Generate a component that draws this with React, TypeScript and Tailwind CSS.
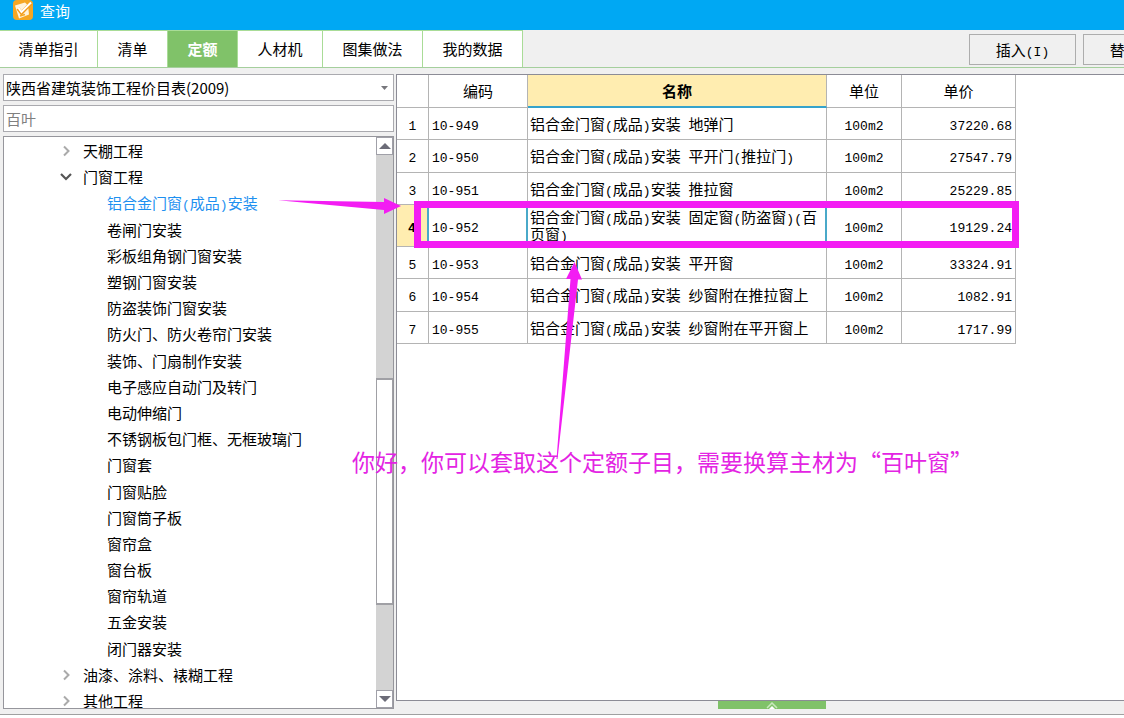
import { useState } from "react";

const TABS = [
  { label: "清单指引", width: "w-[98px]" },
  { label: "清单", width: "w-[70px]" },
  { label: "定额", width: "w-[70px]" },
  { label: "人材机", width: "w-[85px]" },
  { label: "图集做法", width: "w-[100px]" },
  { label: "我的数据", width: "w-[100px]" },
];

type TreeNode = { label: string; level: 1 | 2; open?: boolean };

const TREE: TreeNode[] = [
  { label: "天棚工程", level: 1 },
  { label: "门窗工程", level: 1, open: true },
  { label: "铝合金门窗(成品)安装", level: 2 },
  { label: "卷闸门安装", level: 2 },
  { label: "彩板组角钢门窗安装", level: 2 },
  { label: "塑钢门窗安装", level: 2 },
  { label: "防盗装饰门窗安装", level: 2 },
  { label: "防火门、防火卷帘门安装", level: 2 },
  { label: "装饰、门扇制作安装", level: 2 },
  { label: "电子感应自动门及转门", level: 2 },
  { label: "电动伸缩门", level: 2 },
  { label: "不锈钢板包门框、无框玻璃门", level: 2 },
  { label: "门窗套", level: 2 },
  { label: "门窗贴脸", level: 2 },
  { label: "门窗筒子板", level: 2 },
  { label: "窗帘盒", level: 2 },
  { label: "窗台板", level: 2 },
  { label: "窗帘轨道", level: 2 },
  { label: "五金安装", level: 2 },
  { label: "闭门器安装", level: 2 },
  { label: "油漆、涂料、裱糊工程", level: 1 },
  { label: "其他工程", level: 1 },
];

const ROWS = [
  { code: "10-949", name: "铝合金门窗(成品)安装 地弹门", price: "37220.68" },
  { code: "10-950", name: "铝合金门窗(成品)安装 平开门(推拉门)", price: "27547.79" },
  { code: "10-951", name: "铝合金门窗(成品)安装 推拉窗", price: "25229.85" },
  { code: "10-952", name: "铝合金门窗(成品)安装 固定窗(防盗窗)(百页窗)", price: "19129.24" },
  { code: "10-953", name: "铝合金门窗(成品)安装 平开窗", price: "33324.91" },
  { code: "10-954", name: "铝合金门窗(成品)安装 纱窗附在推拉窗上", price: "1082.91" },
  { code: "10-955", name: "铝合金门窗(成品)安装 纱窗附在平开窗上", price: "1717.99" },
];

// half-width characters are set in a mono face, half as wide as a Chinese one
function Mixed({ text }: { text: string }) {
  const parts = text.split(/([\x20-\x7e]+)/).filter(Boolean);
  return (
    <>
      {parts.map((p, i) =>
        /^[\x20-\x7e]/.test(p) ? (
          <span key={i} className="font-['Liberation_Mono',monospace] text-[13px] leading-none">
            {p}
          </span>
        ) : (
          p
        ),
      )}
    </>
  );
}

function Logo() {
  return (
    <svg className="size-5" viewBox="0 0 20 20" aria-hidden>
      <rect width="20" height="20" rx="4" fill="#f5a623" />
      <path d="M2 5.5 12 2.5l3 3 1 9L6 18.5z" fill="#fff3dc" />
      <path d="M5 8.500l3.500 4.500L18 3" fill="none" stroke="#f29a1a" strokeWidth="3.600" />
      <path d="M5.500 8l3 4L18 2.500" fill="none" stroke="#fff" strokeWidth="2" />
      <path d="M7 16l5-1.500" stroke="#f5a623" strokeWidth="1.500" />
    </svg>
  );
}

function Chevron({ open }: { open?: boolean }) {
  return (
    <svg className="h-3 w-3 shrink-0" viewBox="0 0 12 12" fill="none" aria-hidden>
      {open ? (
        <path d="M1 3l5 5 5-5" stroke="#555" strokeWidth="2.200" />
      ) : (
        <path d="M4 1.500l4.500 4.500L4 10.500" stroke="#aaa" strokeWidth="2" />
      )}
    </svg>
  );
}

function ScrollButton({ down }: { down?: boolean }) {
  return (
    <button
      type="button"
      aria-label={down ? "向下滚动" : "向上滚动"}
      className="flex h-[18px] w-full shrink-0 items-center justify-center border border-[#a0a0a8] bg-white"
    >
      <svg className="h-[6px] w-[12px]" viewBox="0 0 12 6" aria-hidden>
        <path d={down ? "M0 0h12L6 6z" : "M0 6h12L6 0z"} fill="#6c6c78" />
      </svg>
    </button>
  );
}

function Sidebar() {
  const [selected, setSelected] = useState("铝合金门窗(成品)安装");
  return (
    <aside className="flex w-[391px] shrink-0 flex-col gap-1">
      <div className="relative">
        <select
          aria-label="定额库"
          className="block h-[27px] w-full appearance-none border border-[#aaaaaf] bg-white px-[2px] text-[15px] outline-none"
        >
          <option>陕西省建筑装饰工程价目表(2009)</option>
        </select>
        <svg className="pointer-events-none absolute top-3 right-[6px] h-1 w-[7px]" viewBox="0 0 7 4" aria-hidden>
          <path d="M0 0h7L3.500 4z" fill="#77777c" />
        </svg>
      </div>
      <input
        aria-label="搜索"
        defaultValue="百叶"
        className="h-[27px] w-full border border-[#aaaaaf] bg-white px-[2px] text-[15px] text-[#808080] outline-none"
      />
      <div className="flex min-h-0 flex-1 border border-[#96969c] bg-white">
        <div className="min-w-0 flex-1 overflow-hidden">
          <ul className="flex h-[577px] flex-col pt-px">
            {TREE.map((n) => (
              <li key={n.label} className={n.level === 1 ? "flex min-h-0 flex-1 pl-14" : "flex min-h-0 flex-1 pl-[103px]"}>
                <button
                  type="button"
                  onClick={() => setSelected(n.label)}
                  className={
                    n.label === selected
                      ? "flex items-center gap-[11px] whitespace-nowrap text-[#1e90f0]"
                      : "flex items-center gap-[11px] whitespace-nowrap"
                  }
                >
                  {n.level === 1 && <Chevron open={n.open} />}
                  <span>
                    <Mixed text={n.label} />
                  </span>
                </button>
              </li>
            ))}
          </ul>
        </div>
        <div className="flex w-[17px] shrink-0 flex-col bg-[#d3d3d3]">
          <ScrollButton />
          <div className="flex min-h-0 flex-1 flex-col">
            <div className="flex-[225]" />
            <div className="flex-[225] border-x border-y-2 border-[#a0a0a5] bg-white" />
            <div className="flex-[86]" />
          </div>
          <ScrollButton down />
        </div>
      </div>
    </aside>
  );
}

function QuotaTable() {
  const head = "border-r border-b border-[#b4b4b4] p-0 font-normal";
  const cell = "border-r border-b border-[#b4b4b4] px-[3px] py-0";
  return (
    <table className="w-[619px] table-fixed border-separate border-spacing-0">
      <colgroup>
        <col className="w-8" />
        <col className="w-[99px]" />
        <col className="w-[299px]" />
        <col className="w-[75px]" />
        <col className="w-[114px]" />
      </colgroup>
      <thead>
        <tr className="h-[33px]">
          <th className={head} />
          <th className={head}>编码</th>
          <th className="border-r border-b-2 border-r-[#b4b4b4] border-b-[#35a3cc] bg-[#ffedb0] p-0 font-bold">名称</th>
          <th className={head}>单位</th>
          <th className={head}>单价</th>
        </tr>
      </thead>
      <tbody>
        {ROWS.map((r, i) => {
          const active = i === 3;
          return (
            <tr key={r.code} className={active ? "h-[42px]" : "odd:h-8 even:h-[33px]"}>
              <td
                className={
                  active
                    ? "border-r-2 border-b border-r-[#4aa9c9] border-b-[#b4b4b4] bg-[#ffedb0] p-0 text-center font-bold"
                    : "border-r border-b border-[#b4b4b4] p-0 text-center"
                }
              >
                <Mixed text={String(i + 1)} />
              </td>
              <td className={active ? "border-r-2 border-b border-r-[#4aa9c9] border-b-[#b4b4b4] px-[3px] py-0" : cell}>
                <Mixed text={r.code} />
              </td>
              <td
                className={
                  active
                    ? "border-r-2 border-b border-r-[#4aa9c9] border-b-[#b4b4b4] px-[2px] py-0 leading-4"
                    : "border-r border-b border-[#b4b4b4] px-[2px] py-0"
                }
              >
                <Mixed text={r.name} />
              </td>
              <td className={`${cell} text-center`}>
                <Mixed text="100m2" />
              </td>
              <td className={`${cell} text-right`}>
                <Mixed text={r.price} />
              </td>
            </tr>
          );
        })}
      </tbody>
    </table>
  );
}

// hand-drawn notes that lie over the window
function Annotations() {
  return (
    <div className="pointer-events-none absolute inset-0">
      <div className="absolute top-[201px] left-[414px] h-[47px] w-[605px] border-[7px] border-[#f31cf3]" />
      <svg className="absolute top-[198px] left-[278px] h-4 w-[124px]" viewBox="0 0 124 16" fill="#f31cf3" aria-hidden>
        <path d="M0 2.300 106 4V0l17 8-17 8v-4z" />
      </svg>
      <svg className="absolute top-[262px] left-[556px] h-[197px] w-7" viewBox="0 0 28 197" fill="#f31cf3" aria-hidden>
        <path d="M.500 197 14.500 17H10L18.500 0 26 17.500h-4L1.500 197z" />
      </svg>
      <p className="absolute top-[444px] left-[352px] text-[23px] leading-[34px] whitespace-nowrap text-[#e324e3]">
        你好，你可以套取这个定额子目，需要换算主材为“百叶窗”
      </p>
    </div>
  );
}

export default function App() {
  const [tab, setTab] = useState("定额");
  return (
    <div
      lang="zh-CN"
      className="relative flex h-screen flex-col overflow-hidden bg-white font-['Noto_Sans_CJK_SC',sans-serif] text-[15px] leading-5 text-black"
    >
      <header className="flex h-[30px] shrink-0 items-start gap-[7px] bg-[#00a8f3] pl-[13px] text-white">
        <Logo />
        <h1 className="pt-px">查询</h1>
      </header>

      <div className="flex h-[38px] shrink-0 justify-between overflow-hidden border-b border-[#a5cf9d] bg-[#f0f0f0]">
        <nav className="flex shrink-0 border-t border-[#a9dc97]">
          {TABS.map((t) => (
            <button
              key={t.label}
              type="button"
              onClick={() => setTab(t.label)}
              className={`${t.width} border-r border-[#a9dc97] ${
                t.label === tab ? "bg-[#80c269] font-bold text-white" : "bg-white"
              }`}
            >
              {t.label}
            </button>
          ))}
        </nav>
        <div className="flex w-[155px] shrink-0 gap-[7px] pt-1">
          <button type="button" className="h-[31px] w-[107px] shrink-0 border border-[#adadad] bg-[#f0f0f0]">
            <Mixed text="插入(I)" />
          </button>
          <button type="button" className="h-[31px] w-[107px] shrink-0 border border-[#adadad] bg-[#f0f0f0]">
            <Mixed text="替换(R)" />
          </button>
        </div>
      </div>

      <div className="mb-[3px] flex min-h-0 flex-1 gap-[2px] border-b border-[#a0a0a0] bg-[#f0f0f0] pt-[6px] pl-[3px]">
        <div className="flex pb-[5px]">
          <Sidebar />
        </div>
        <main className="flex min-w-0 flex-1 flex-col">
          <div className="min-h-0 flex-1 border-t border-b border-l border-[#8c8c96] bg-white">
            <QuotaTable />
          </div>
          <div className="flex h-[13px] shrink-0 justify-center">
            <button
              type="button"
              aria-label="展开"
              className="mr-[-24px] flex h-2 w-[108px] items-end justify-center bg-[#80c269]"
            >
              <svg className="h-[7px] w-3" viewBox="0 0 12 7" fill="none" aria-hidden>
                <path d="M1 6l5-5 5 5" stroke="#c9e8bd" strokeWidth="1.500" />
                <path d="M3 7l3-3 3 3z" fill="#fff" />
              </svg>
            </button>
          </div>
        </main>
      </div>

      <Annotations />
    </div>
  );
}
